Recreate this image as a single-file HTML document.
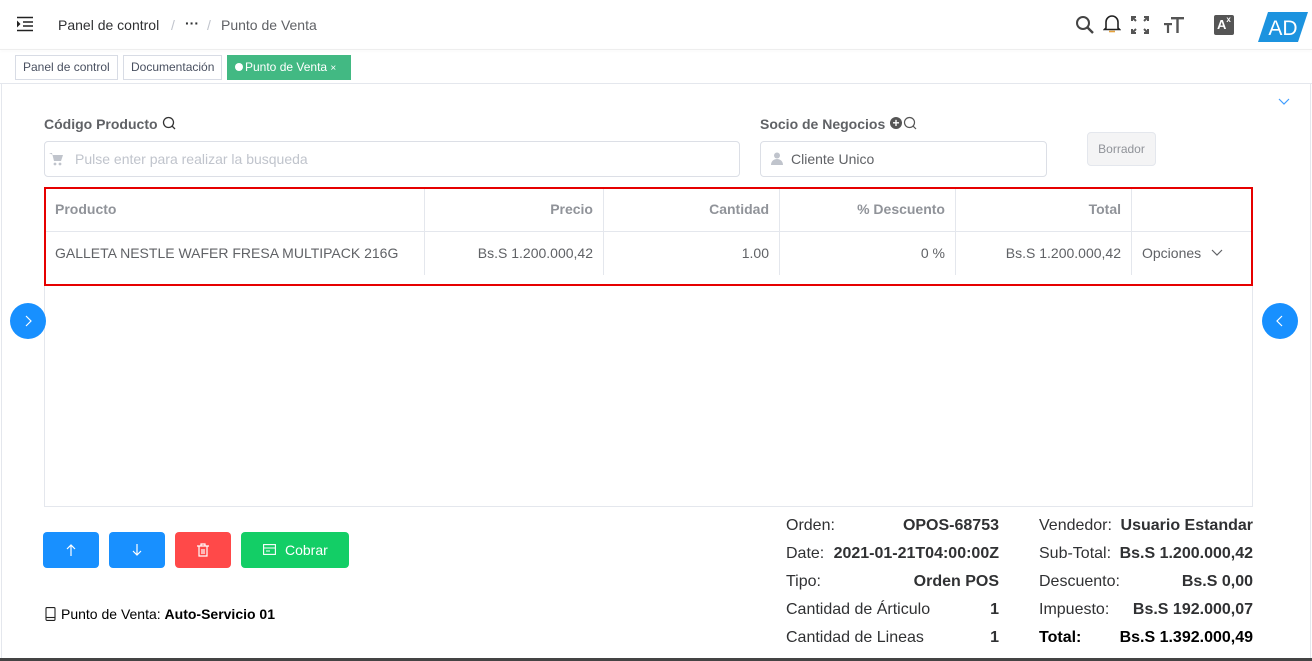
<!DOCTYPE html>
<html><head><meta charset="utf-8"><style>
*{box-sizing:border-box;margin:0;padding:0}
body{width:1312px;height:661px;overflow:hidden;background:#fff;font-family:"Liberation Sans",sans-serif;position:relative;color:#303133}
.a{position:absolute}
.t{font-size:14px;white-space:nowrap}
.tag{position:absolute;top:55px;height:25px;border:1px solid #d8dce5;font-size:12px;line-height:23px;padding:0 7px;color:#495060;background:#fff}
.col{position:absolute;top:188px;width:1px;height:87px;background:#e4e7ed}
.th{position:absolute;top:201px;font-size:14px;font-weight:bold;color:#909399}
.td{position:absolute;top:245px;font-size:14px;color:#606266}
.btn{position:absolute;top:532px;height:36px;border-radius:4px;color:#fff}
.s{position:absolute;font-size:16px;color:#303133}
.b{font-weight:bold}
</style></head><body>
<svg class="a" style="left:16px;top:16px" width="18" height="16" viewBox="0 0 18 16"><path d="M1 1.5H17M7 6H17M7 10H17M1 14.5H17" stroke="#222" stroke-width="1.6"/><path d="M1 4.5L4.5 8L1 11.5Z" fill="#222"/></svg>
<div class="a t" style="left:58px;top:17px;color:#303133">Panel de control</div>
<div class="a t" style="left:171px;top:17px;color:#c0c4cc">/</div>
<div class="a t" style="left:185px;top:15px;color:#303133;font-weight:bold">···</div>
<div class="a t" style="left:207px;top:17px;color:#c0c4cc">/</div>
<div class="a t" style="left:221px;top:17px;color:#606266">Punto de Venta</div>
<svg class="a" style="left:1075px;top:15px" width="20" height="20" viewBox="0 0 20 20"><circle cx="8" cy="8" r="6" fill="none" stroke="#444" stroke-width="2"/><path d="M12.5 12.5L18 18" stroke="#444" stroke-width="2.4"/></svg>
<svg class="a" style="left:1103px;top:14px" width="18" height="20" viewBox="0 0 18 20"><path d="M3 14V8a6 6 0 0 1 12 0v6l1.5 1.5h-15Z" fill="none" stroke="#222" stroke-width="1.6"/><path d="M6 17.5h6" stroke="#e6a23c" stroke-width="1.6"/></svg>
<svg class="a" style="left:1130px;top:15px" width="20" height="20" viewBox="0 0 20 20" fill="none" stroke="#555" stroke-width="2"><path d="M2 6V2h4M2 2l4 4M18 6V2h-4M18 2l-4 4M2 14v4h4M2 18l4-4M18 14v4h-4M18 18l-4-4"/></svg>
<svg class="a" style="left:1163px;top:15px" width="22" height="20" viewBox="0 0 22 20" fill="#555"><rect x="1" y="8" width="8" height="2.2"/><rect x="3.9" y="8" width="2.2" height="10"/><rect x="8" y="2" width="13" height="2.4"/><rect x="13.3" y="2" width="2.4" height="16"/></svg>
<div class="a" style="left:1214px;top:15px;width:20px;height:20px;background:#555;border-radius:2px;color:#fff;font-size:13px;font-weight:bold;line-height:20px;padding-left:3px">A<span style="font-size:8px;vertical-align:top;line-height:10px">x</span></div>
<svg class="a" style="left:1258px;top:12px" width="50" height="30" viewBox="0 0 50 30"><path d="M10 0H50L40 30H0Z" fill="#1c93df"/><text x="25" y="23" text-anchor="middle" font-family="Liberation Sans" font-size="21" fill="#fff">AD</text></svg>
<div class="a" style="left:0;top:49px;width:1312px;height:1px;background:#eee;box-shadow:0 1px 3px rgba(0,0,0,.06)"></div>
<div class="tag" style="left:15px">Panel de control</div>
<div class="tag" style="left:123px">Documentación</div>
<div class="tag" style="left:227px;width:124px;background:#42b983;border-color:#42b983;color:#fff"><span style="display:inline-block;width:8px;height:8px;border-radius:50%;background:#fff;margin-right:2px"></span>Punto de Venta <span style="font-size:10px">×</span></div>
<div class="a" style="left:0;top:83px;width:1312px;height:1px;background:#e4e7ed"></div>
<div class="a" style="left:1px;top:84px;width:1px;height:574px;background:#e4e7ed"></div>
<div class="a" style="left:1310px;top:84px;width:1px;height:574px;background:#e4e7ed"></div>
<div class="a" style="left:0;top:658px;width:1312px;height:3px;background:#444"></div>
<svg class="a" style="left:1278px;top:98px" width="12" height="8" viewBox="0 0 12 8"><path d="M1 1l5 5 5-5" fill="none" stroke="#409eff" stroke-width="1.2"/></svg>
<div class="a t b" style="left:44px;top:116px;color:#606266">Código Producto</div>
<svg class="a" style="left:162px;top:116px" width="14" height="14" viewBox="0 0 14 14"><circle cx="6.5" cy="6.5" r="5" fill="none" stroke="#333" stroke-width="1.3"/><path d="M10 10l3 3" stroke="#333" stroke-width="1.3"/></svg>
<div class="a" style="left:44px;top:141px;width:696px;height:36px;border:1px solid #dcdfe6;border-radius:4px"></div>
<svg class="a" style="left:49px;top:152px" width="14" height="14" viewBox="0 0 14 14" fill="#c0c4cc"><path d="M0 1h3l2 8h7l2-6H4" /><circle cx="6" cy="12" r="1.4"/><circle cx="11" cy="12" r="1.4"/></svg>
<div class="a t" style="left:75px;top:151px;color:#c0c4cc">Pulse enter para realizar la busqueda</div>
<div class="a t b" style="left:760px;top:116px;color:#606266">Socio de Negocios</div>
<div class="a" style="left:890px;top:117px;width:12px;height:12px;border-radius:50%;background:#555;color:#fff;font-size:12px;line-height:12px;text-align:center;font-weight:bold">+</div>
<svg class="a" style="left:903px;top:116px" width="14" height="14" viewBox="0 0 14 14"><circle cx="6.5" cy="6.5" r="5" fill="none" stroke="#555" stroke-width="1.2"/><path d="M10 10l3 3" stroke="#555" stroke-width="1.2"/></svg>
<div class="a" style="left:760px;top:141px;width:287px;height:36px;border:1px solid #dcdfe6;border-radius:4px"></div>
<svg class="a" style="left:771px;top:152px" width="12" height="13" viewBox="0 0 12 13" fill="#c0c4cc"><circle cx="6" cy="3.5" r="3"/><path d="M0 13c0-4 3-6 6-6s6 2 6 6Z"/></svg>
<div class="a t" style="left:791px;top:151px;color:#606266">Cliente Unico</div>
<div class="a" style="left:1087px;top:132px;width:69px;height:34px;background:#f4f4f5;border:1px solid #e4e7ed;border-radius:4px;font-size:12px;color:#909399;text-align:center;line-height:33px">Borrador</div>
<div class="a" style="left:44px;top:187px;width:1209px;height:320px;border:1px solid #e4e7ed"></div>
<div class="a" style="left:45px;top:231px;width:1207px;height:1px;background:#e4e7ed"></div>
<div class="col" style="left:424px"></div><div class="col" style="left:603px"></div><div class="col" style="left:779px"></div><div class="col" style="left:955px"></div><div class="col" style="left:1131px"></div>
<div class="a" style="left:44px;top:187px;width:1209px;height:99px;border:2px solid #e60000"></div>
<div class="th" style="left:55px">Producto</div>
<div class="th" style="left:424px;width:169px;text-align:right">Precio</div>
<div class="th" style="left:603px;width:166px;text-align:right">Cantidad</div>
<div class="th" style="left:779px;width:166px;text-align:right">% Descuento</div>
<div class="th" style="left:955px;width:166px;text-align:right">Total</div>
<div class="td" style="left:55px">GALLETA NESTLE WAFER FRESA MULTIPACK 216G</div>
<div class="td" style="left:424px;width:169px;text-align:right">Bs.S 1.200.000,42</div>
<div class="td" style="left:603px;width:166px;text-align:right">1.00</div>
<div class="td" style="left:779px;width:166px;text-align:right">0 %</div>
<div class="td" style="left:955px;width:166px;text-align:right">Bs.S 1.200.000,42</div>
<div class="td" style="left:1142px">Opciones</div>
<svg class="a" style="left:1211px;top:249px" width="12" height="8" viewBox="0 0 12 8"><path d="M1 1l5 5 5-5" fill="none" stroke="#606266" stroke-width="1.2"/></svg>
<div class="a" style="left:10px;top:303px;width:36px;height:36px;border-radius:50%;background:#1890ff"></div>
<svg class="a" style="left:23px;top:314px" width="10" height="14" viewBox="0 0 10 14"><path d="M3 2l5 5-5 5" fill="none" stroke="#fff" stroke-width="1.2"/></svg>
<div class="a" style="left:1262px;top:303px;width:36px;height:36px;border-radius:50%;background:#1890ff"></div>
<svg class="a" style="left:1275px;top:314px" width="10" height="14" viewBox="0 0 10 14"><path d="M7 2L2 7l5 5" fill="none" stroke="#fff" stroke-width="1.2"/></svg>
<div class="btn" style="left:43px;width:56px;background:#1890ff"><svg style="position:absolute;left:22px;top:11px" width="12" height="14" viewBox="0 0 12 14"><path d="M6 13V2M2 6l4-4 4 4" fill="none" stroke="#fff" stroke-width="1.2"/></svg></div>
<div class="btn" style="left:109px;width:56px;background:#1890ff"><svg style="position:absolute;left:22px;top:11px" width="12" height="14" viewBox="0 0 12 14"><path d="M6 1v11M2 8l4 4 4-4" fill="none" stroke="#fff" stroke-width="1.2"/></svg></div>
<div class="btn" style="left:175px;width:56px;background:#ff4949"><svg style="position:absolute;left:21px;top:11px" width="14" height="14" viewBox="0 0 14 14"><path d="M1 3h12M5 3V1h4v2M3 3v10h8V3M6 6v5M8 6v5" fill="none" stroke="#fff" stroke-width="1.2"/></svg></div>
<div class="btn" style="left:241px;width:108px;background:#13ce66;font-size:14px;line-height:36px"><svg style="position:absolute;left:22px;top:12px" width="13" height="11" viewBox="0 0 13 11"><rect x=".6" y=".6" width="11.8" height="9.8" fill="none" stroke="#fff" stroke-width="1.1"/><path d="M1 4h11M3 7h4" stroke="#fff" stroke-width="1.1"/></svg><span style="position:absolute;left:44px">Cobrar</span></div>
<svg class="a" style="left:45px;top:607px" width="11" height="14" viewBox="0 0 11 14"><rect x="1" y=".6" width="9" height="12.8" rx="1" fill="none" stroke="#222" stroke-width="1.1"/><path d="M1 10.5h9" stroke="#222" stroke-width="1.1"/></svg>
<div class="a t" style="left:61px;top:606px;color:#000">Punto de Venta: <b>Auto-Servicio 01</b></div>
<div class="s" style="left:786px;top:517px">Orden:</div><div class="s b" style="left:830px;width:169px;top:517px;text-align:right">OPOS-68753</div>
<div class="s" style="left:786px;top:545px">Date:</div><div class="s b" style="left:830px;width:169px;top:545px;text-align:right">2021-01-21T04:00:00Z</div>
<div class="s" style="left:786px;top:573px">Tipo:</div><div class="s b" style="left:830px;width:169px;top:573px;text-align:right">Orden POS</div>
<div class="s" style="left:786px;top:601px">Cantidad de Árticulo</div><div class="s b" style="left:830px;width:169px;top:601px;text-align:right">1</div>
<div class="s" style="left:786px;top:629px">Cantidad de Lineas</div><div class="s b" style="left:830px;width:169px;top:629px;text-align:right">1</div>
<div class="s" style="left:1039px;top:517px">Vendedor:</div><div class="s b" style="left:1080px;width:173px;top:517px;text-align:right">Usuario Estandar</div>
<div class="s" style="left:1039px;top:545px">Sub-Total:</div><div class="s b" style="left:1080px;width:173px;top:545px;text-align:right">Bs.S 1.200.000,42</div>
<div class="s" style="left:1039px;top:573px">Descuento:</div><div class="s b" style="left:1080px;width:173px;top:573px;text-align:right">Bs.S 0,00</div>
<div class="s" style="left:1039px;top:601px">Impuesto:</div><div class="s b" style="left:1080px;width:173px;top:601px;text-align:right">Bs.S 192.000,07</div>
<div class="s b" style="left:1039px;top:629px;color:#000">Total:</div><div class="s b" style="left:1080px;width:173px;top:629px;text-align:right;color:#000">Bs.S 1.392.000,49</div>
</body></html>
